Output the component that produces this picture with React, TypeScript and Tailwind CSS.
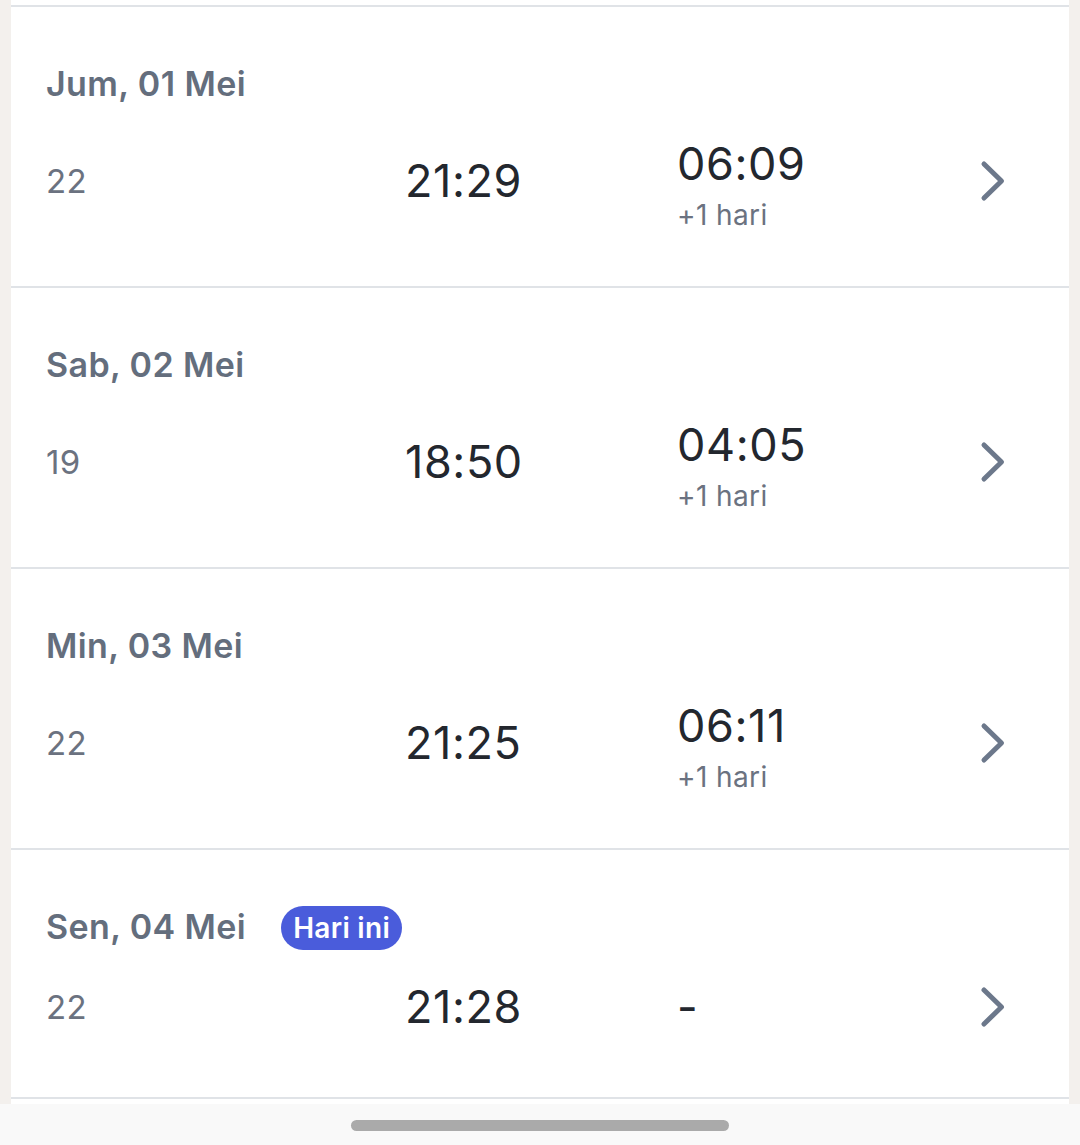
import { Fragment } from "react";

type Day = {
  label: string;
  count: string;
  start: string;
  end?: string;
  nextDay?: boolean;
  today?: boolean;
};

const days: Day[] = [
  { label: "Jum, 01 Mei", count: "22", start: "21:29", end: "06:09", nextDay: true },
  { label: "Sab, 02 Mei", count: "19", start: "18:50", end: "04:05", nextDay: true },
  { label: "Min, 03 Mei", count: "22", start: "21:25", end: "06:11", nextDay: true },
  { label: "Sen, 04 Mei", count: "22", start: "21:28", today: true },
];

function Chevron() {
  return (
    <svg width="26" height="42" viewBox="0 0 26 42" fill="none" aria-hidden>
      <path
        d="M4 4 L21.5 21 L4 38"
        stroke="#6c788b"
        strokeWidth={5}
        strokeLinecap="round"
        strokeLinejoin="round"
      />
    </svg>
  );
}

function DayRow({ day }: { day: Day }) {
  return (
    <div
      className={
        day.today
          ? "border-b-2 border-[#e0e3e7] pl-[35px] pr-[63px] pt-[55px] pb-[64px]"
          : "border-b-2 border-[#e0e3e7] pl-[35px] pr-[63px] pt-[55px] pb-[62px]"
      }
    >
      <div className="flex h-[44px] items-center gap-[35px]">
        <span className="text-[34px] font-semibold leading-[44px] tracking-[0.4px] text-[#646e7d]">
          {day.label}
        </span>
        {day.today && (
          <span className="mt-[2px] flex h-[44px] items-center rounded-full bg-[#4a5cdb] px-[12px] text-[28px] font-semibold tracking-[0.3px] text-white">
            Hari ini
          </span>
        )}
      </div>
      <div className="mt-[32px] grid grid-cols-[359px_272px_1fr_auto] items-center">
        <span className="text-[33px] leading-[40px] tracking-[0.4px] text-[#6b7280]">{day.count}</span>
        <span className="text-[45px] leading-[52px] tracking-[0.6px] text-[#23272e]">{day.start}</span>
        <div className="flex flex-col">
          <span className="text-[45px] leading-[52px] tracking-[0.6px] text-[#23272e]">{day.end ?? "-"}</span>
          {day.nextDay && (
            <span className="mt-[16px] text-[28px] leading-[18px] tracking-[0.4px] text-[#6b7280]">+1 hari</span>
          )}
        </div>
        <Chevron />
      </div>
    </div>
  );
}

export default function App() {
  return (
    <div
      className="flex min-h-screen flex-col bg-[#f3f0ed]"
      style={{ fontFamily: "Inter, 'Noto Sans', sans-serif" }}
    >
      <div className="mx-[11px] bg-white">
        <div className="h-[7px] border-b-2 border-[#e0e3e7]" />
        {days.map((d) => (
          <Fragment key={d.label}>
            <DayRow day={d} />
          </Fragment>
        ))}
        <div className="h-[5px]" />
      </div>
      <div className="flex h-[42px] justify-center bg-[#f9f9f9] pt-[16px]">
        <div className="h-[11px] w-[378px] rounded-full bg-[#aaaaaa]" />
      </div>
    </div>
  );
}
